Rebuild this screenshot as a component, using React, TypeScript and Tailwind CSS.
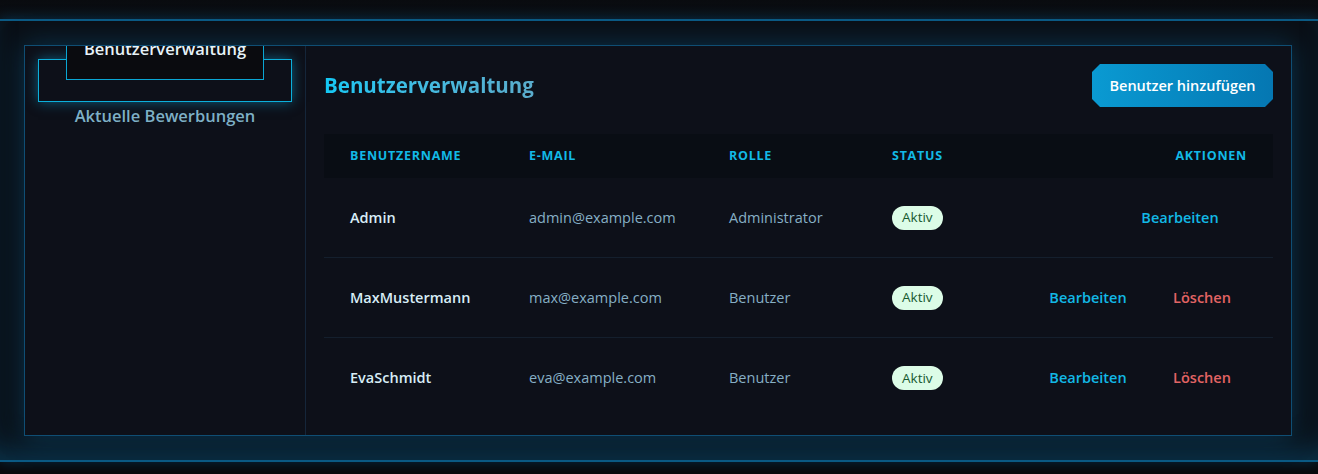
import React from 'react';

type User = {
  name: string;
  email: string;
  role: string;
  canDelete: boolean;
};

const users: User[] = [
  { name: 'Admin', email: 'admin@example.com', role: 'Administrator', canDelete: false },
  { name: 'MaxMustermann', email: 'max@example.com', role: 'Benutzer', canDelete: true },
  { name: 'EvaSchmidt', email: 'eva@example.com', role: 'Benutzer', canDelete: true },
];

const cols = 'grid grid-cols-[179px_200px_163px_149px_1fr] items-center';

function Sidebar() {
  return (
    <aside className="relative w-[281px] shrink-0 border-r border-[#15263a] p-[13px]">
      <div className="h-[43px] border border-[#0cb0dc] shadow-[0_0_12px_rgba(14,170,225,0.5)]" />
      {/* active label sits on top of the box, pushed up */}
      <div className="absolute left-[41px] top-[-16px] h-[50px] w-[198px] border border-[#0aa6d4] bg-[#0a0b0f] pt-[6px] text-center text-[16.5px] font-semibold leading-[24px] text-[#e6f2f8]">
        Benutzerverwaltung
      </div>
      <div className="mt-[2px] text-center text-[16.5px] font-semibold leading-[24px] text-[#7eb0c6]">
        Aktuelle Bewerbungen
      </div>
    </aside>
  );
}

function UserTable() {
  return (
    <div className="mt-[27px]">
      <div className={`${cols} h-[44px] bg-[#090d14] text-[12.5px] font-bold uppercase tracking-[0.06em] text-[#12b9e6]`}>
        <div className="pl-[26px]">Benutzername</div>
        <div className="pl-[26px]">E-Mail</div>
        <div className="pl-[26px]">Rolle</div>
        <div className="pl-[26px]">Status</div>
        <div className="pr-[26px] text-right">Aktionen</div>
      </div>
      {users.map((u, i) => (
        <div
          key={u.name}
          className={`${cols} h-[80px] text-[14.5px] ${i < users.length - 1 ? 'border-b border-[#141f2d]' : ''}`}
        >
          <div className="pl-[26px] font-semibold text-[#d8edf6]">{u.name}</div>
          <div className="pl-[26px] text-[#86afc5]">{u.email}</div>
          <div className="pl-[26px] text-[#86afc5]">{u.role}</div>
          <div className="pl-[26px]">
            <span className="inline-flex h-[24px] items-center rounded-full bg-[#dcfce7] px-[10px] text-[13.5px] font-medium text-[#17592f]">
              Aktiv
            </span>
          </div>
          <div className="flex justify-end pr-[25px] font-semibold">
            <button className="mr-[22px] w-[92px] text-center text-[#12b9e6]">Bearbeiten</button>
            {u.canDelete && <button className="w-[92px] text-center text-[#e26464]">Löschen</button>}
          </div>
        </div>
      ))}
    </div>
  );
}

export default function App() {
  return (
    <div className="min-h-screen bg-[#08090c] font-['Open_Sans',sans-serif]">
      <div className="h-[19px] bg-gradient-to-b from-[#090b0f] to-[#0b1016]" />
      <section className="border-y-2 border-[#0b5a84] bg-[#0a0f16] py-[24px] pl-[24px] pr-[26px] shadow-[inset_0_-24px_30px_-14px_rgba(10,95,140,0.45),0_0_12px_rgba(10,110,170,0.35)]">
        <div className="flex h-[391px] overflow-hidden border border-[#0f4e74] bg-[#0d1019] shadow-[0_0_26px_rgba(12,120,180,0.35)]">
          <Sidebar />
          <main className="flex-1 p-[18px]">
            <div className="flex h-[43px] items-center justify-between">
              <h1 className="bg-gradient-to-r from-[#10c8f4] to-[#5aaccc] bg-clip-text text-[20.5px] font-bold text-transparent">
                Benutzerverwaltung
              </h1>
              <button className="h-[43px] w-[181px] bg-gradient-to-r from-[#0a9ad2] to-[#0577b2] text-[14.5px] font-semibold text-white [clip-path:polygon(8px_0,calc(100%-8px)_0,100%_8px,100%_calc(100%-8px),calc(100%-8px)_100%,8px_100%,0_calc(100%-8px),0_8px)]">
                Benutzer hinzufügen
              </button>
            </div>
            <UserTable />
          </main>
        </div>
      </section>
    </div>
  );
}
